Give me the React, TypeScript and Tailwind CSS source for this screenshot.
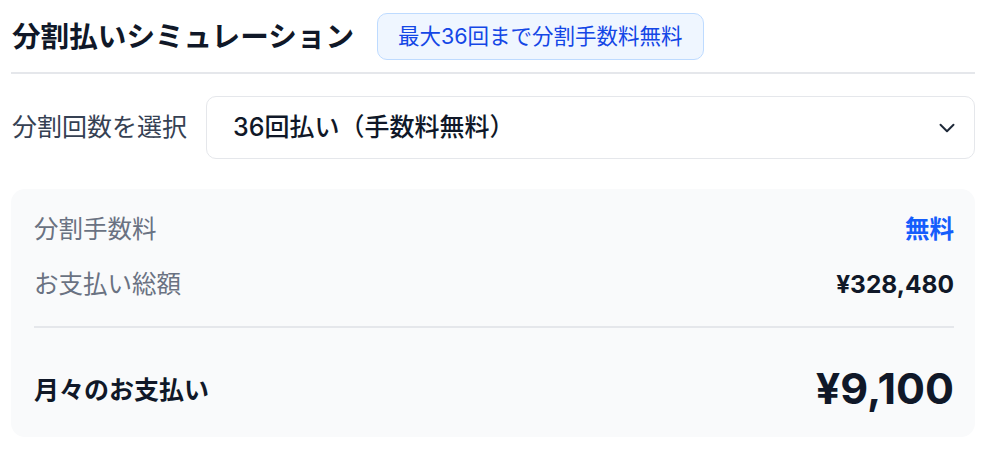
import React from 'react';
import { ChevronDown } from 'lucide-react';

const rows = [
  { label: '分割手数料', value: '無料', valueClass: 'text-blue-600 text-[24.5px]' },
  { label: 'お支払い総額', value: '¥328,480', valueClass: 'text-gray-900 text-[24.5px]' },
];

export default function App() {
  return (
    <div className="bg-white min-h-screen font-['Inter','Noto_Sans_CJK_JP',sans-serif]">
      <div className="ml-[11px] w-[964px]">
        {/* Header */}
        <div className="flex items-center gap-[23px] pt-[13px] pb-[12px] border-b-2 border-gray-200">
          <h2 className="text-[28.6px] leading-[47px] font-bold text-gray-900 pl-px">分割払いシミュレーション</h2>
          <span className="h-[47px] flex items-center px-[20px] rounded-[10px] border border-blue-200 bg-blue-50 text-[21.5px] text-blue-700">
            最大36回まで分割手数料無料
          </span>
        </div>

        {/* Select */}
        <div className="flex items-center gap-[19px] mt-[22px]">
          <label className="text-[25px] text-gray-700 pl-px">分割回数を選択</label>
          <div className="flex-1 h-[63px] flex items-center justify-between pl-[26px] pr-[14px] rounded-[10px] border border-gray-200 bg-white">
            <span className="text-[25px] font-medium text-gray-900">36回払い（手数料無料）</span>
            <ChevronDown size={26} strokeWidth={1.8} className="text-gray-800" />
          </div>
        </div>

        {/* Summary panel */}
        <div className="mt-[30px] rounded-[14px] bg-gray-50 pl-[23px] pr-[21px] pt-[23px] pb-[22px]">
          <div className="flex flex-col gap-[21px]">
            {rows.map((row) => (
              <div key={row.label} className="flex items-center justify-between leading-[34px]">
                <span className="text-[24.5px] text-gray-500">{row.label}</span>
                <span className={`font-bold ${row.valueClass}`}>{row.value}</span>
              </div>
            ))}
          </div>
          <div className="h-[2px] bg-gray-200 mt-[25px]" />
          <div className="flex items-center justify-between mt-[33px] leading-[50px]">
            <span className="text-[25px] font-bold text-gray-900 pt-[4px]">月々のお支払い</span>
            <span className="text-[43px] font-bold text-gray-900">¥9,100</span>
          </div>
        </div>
      </div>
    </div>
  );
}
